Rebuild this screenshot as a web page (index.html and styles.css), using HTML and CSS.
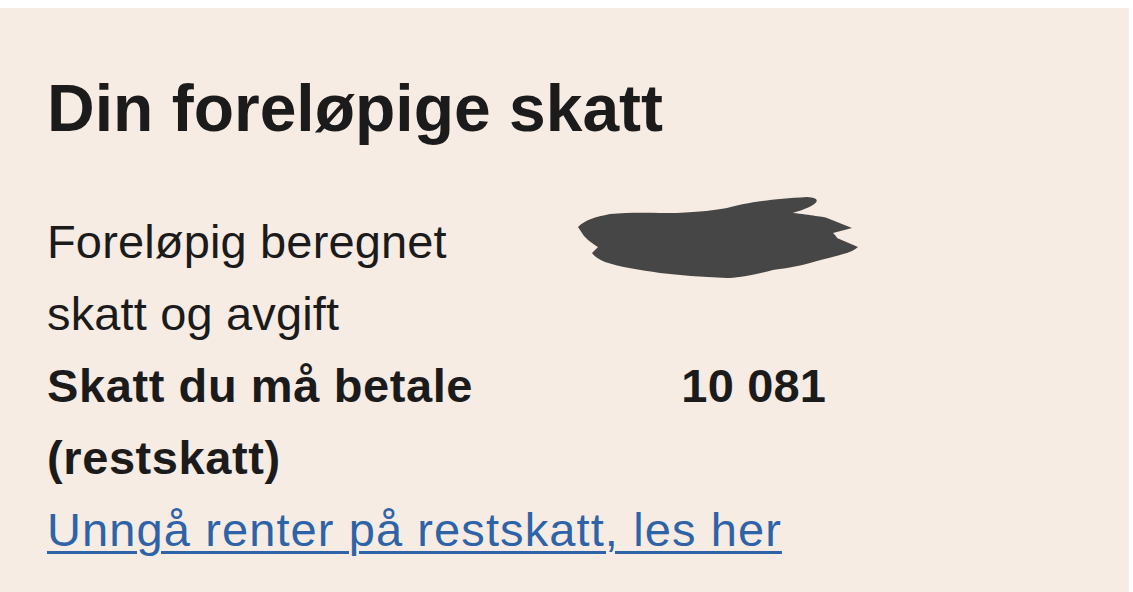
FILE: index.html
```html
<!DOCTYPE html>
<html lang="nb">
<head>
  <meta charset="UTF-8" />
  <title>Din foreløpige skatt</title>
  <link rel="stylesheet" href="styles.css">
</head>
<body>
  <section class="card">
    <h1>Din foreløpige skatt</h1>

    <dl class="rows">
      <dt>Foreløpig beregnet skatt og avgift</dt>
      <dd class="hidden-value">
        <!-- sladdet beløp -->
        <svg class="smudge" width="300" height="95" viewBox="0 0 300 95" aria-hidden="true">
          <path d="M8,37 C15,30 25,27 40,24 C60,22 85,23 107,23 C130,22 145,20 157,18 C175,13 200,9 237,7 C250,8 250,12 237,18 C230,21 225,22 223,23 C240,25 255,27 257,28 L282,38 L263,43 C265,45 267,47 267,48 L288,57 C285,60 280,62 277,63 C260,68 250,70 240,73 C225,77 210,79 203,80 C180,86 165,88 157,88 C130,87 110,85 90,83 C70,80 50,77 35,72 C28,69 24,66 22,63 L28,57 C20,52 14,47 12,43 Z" fill="#464646"/>
        </svg>
      </dd>

      <dt class="strong">Skatt du må betale (restskatt)</dt>
      <dd class="strong">10 081</dd>
    </dl>

    <a href="#" class="link">Unngå renter på restskatt, les her</a>
  </section>
</body>
</html>
```

FILE: styles.css
```css
body {
  margin: 0;
  background: #ffffff;
  font-family: "Liberation Sans", Arial, sans-serif;
  color: #1b1b1b;
}

.card {
  margin-top: 8px;
  width: 1129px;
  height: 584px;
  box-sizing: border-box;
  background: #f6ece3;
  padding: 62px 0 0 47px;
}

h1 {
  margin: 0;
  font-size: 66px;
  line-height: 76px;
  font-weight: bold;
}

.rows {
  display: grid;
  grid-template-columns: 481px 298px;
  margin: 60px 0 0 0;
  font-size: 47px;
  line-height: 72px;
  letter-spacing: 0.15px;
}

.rows dt,
.rows dd {
  margin: 0;
}

.rows dd {
  text-align: right;
}

.strong {
  font-weight: bold;
}

.rows dt.strong {
  letter-spacing: 0.6px;
}

.hidden-value {
  position: relative;
}

.smudge {
  position: absolute;
  left: 42px;
  top: -16px;
}

.link {
  display: block;
  font-size: 47px;
  line-height: 72px;
  letter-spacing: 1.1px;
  color: #2e63a8;
  text-decoration: underline;
  text-decoration-thickness: 3px;
  text-underline-offset: 5px;
}
```
